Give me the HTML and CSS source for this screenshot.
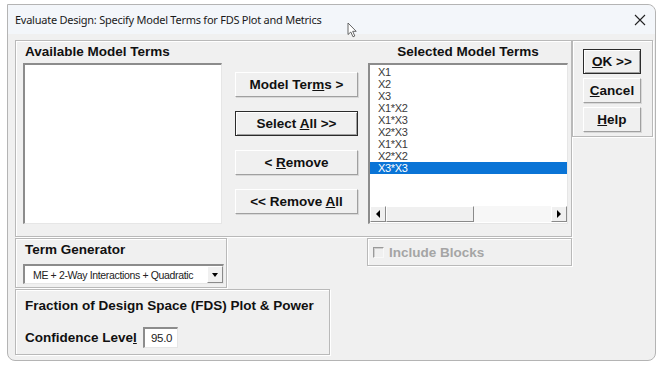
FILE: index.html
```html
<!DOCTYPE html>
<html lang="en">
<head>
    <meta charset="UTF-8">
    <title>Evaluate Design: Specify Model Terms for FDS Plot and Metrics</title>
    <link rel="stylesheet" href="styles.css">
</head>
<body>
    <div class="window">
        <div class="titlebar">
            <span class="title">Evaluate Design: Specify Model Terms for FDS Plot and Metrics</span>
            <svg class="close" width="12" height="12" viewBox="0 0 12 12">
                <path d="M1 1 L11 11 M11 1 L1 11" stroke="#222" stroke-width="1.1" fill="none"/>
            </svg>
        </div>
        <svg class="cursor" width="11" height="16" viewBox="0 0 11 16">
            <path d="M1 1 L1 12.5 L3.8 10 L6 14.8 L7.8 14 L5.7 9.3 L9.2 9.3 Z" fill="#fff" stroke="#555" stroke-width="0.9"/>
        </svg>

        <div class="client">
            <div class="top-row">
                <div class="group main-group">
                    <div class="list-col">
                        <div class="group-label">Available Model Terms</div>
                        <div class="listbox"></div>
                    </div>
                    <div class="button-col">
                        <button class="btn wide">Model Ter<u>m</u>s &gt;</button>
                        <button class="btn wide default">Select <u>A</u>ll &gt;&gt;</button>
                        <button class="btn wide">&lt; <u>R</u>emove</button>
                        <button class="btn wide">&lt;&lt; Remove <u>A</u>ll</button>
                    </div>
                    <div class="list-col selected-col">
                        <div class="group-label centered">Selected Model Terms</div>
                        <div class="listbox terms">
                            <ul class="items">
                                <li>X1</li>
                                <li>X2</li>
                                <li>X3</li>
                                <li>X1*X2</li>
                                <li>X1*X3</li>
                                <li>X2*X3</li>
                                <li>X1*X1</li>
                                <li>X2*X2</li>
                                <li class="selected">X3*X3</li>
                            </ul>
                            <div class="hscroll">
                                <div class="arrow-btn"><span class="tri left"></span></div>
                                <div class="thumb"></div>
                                <div class="track"></div>
                                <div class="arrow-btn"><span class="tri right"></span></div>
                            </div>
                        </div>
                    </div>
                </div>
                <div class="group side-group">
                    <button class="btn small default"><u>O</u>K &gt;&gt;</button>
                    <button class="btn small"><u>C</u>ancel</button>
                    <button class="btn small"><u>H</u>elp</button>
                </div>
            </div>

            <div class="bottom-row">
                <div class="left-stack">
                    <div class="group term-group">
                        <div class="group-label">Term Generator</div>
                        <div class="combo">
                            <span class="combo-text">ME + 2-Way Interactions + Quadratic</span>
                            <div class="combo-btn"><span class="tri down"></span></div>
                        </div>
                    </div>
                    <div class="group fds-group">
                        <div class="group-label">Fraction of Design Space (FDS) Plot &amp; Power</div>
                        <div class="field-row">
                            <span class="field-label">Confidence Leve<u>l</u></span>
                            <div class="textbox">95.0</div>
                        </div>
                    </div>
                </div>
                <div class="group blocks-group">
                    <span class="checkbox"></span>
                    <span class="disabled-label">Include Blocks</span>
                </div>
            </div>
        </div>
    </div>
</body>
</html>
```

FILE: styles.css
```css
body {
    margin: 0;
    background: #ffffff;
    font-family: "Liberation Sans", Arial, sans-serif;
}

.window {
    position: relative;
    margin: 4px 0 0 7px;
    width: 647px;
    height: 355px;
    border: 1px solid #b4b4b4;
    border-radius: 0 8px 8px 8px;
    background: #f0f0f0;
}
.window:after {
    content: '';
    position: absolute;
    left: 78px;
    right: -2px;
    bottom: -3px;
    height: 2px;
    background: #9c9c24;
}

.titlebar {
    height: 29px;
    display: flex;
    align-items: center;
    justify-content: space-between;
    padding: 0 9px 0 7px;
    background: #f3f6fa;
    border-radius: 0 8px 0 0;
}
.title {
    font-family: "Noto Sans", sans-serif;
    font-size: 11px;
    color: #1a1a1a;
    letter-spacing: -0.25px;
}
.close {
    margin-top: 1px;
}
.cursor {
    position: absolute;
    left: 339px;
    top: 17px;
}

.client {
    padding: 6px 0 0 7px;
}

.group {
    box-sizing: border-box;
    border: 1px solid #b9b9b9;
    box-shadow: inset 1px 1px 0 #ffffff, 1px 1px 0 #ffffff;
}
.group-label {
    font-weight: bold;
    font-size: 13.5px;
    color: #111;
    height: 21px;
    line-height: 20px;
    padding-left: 2px;
}
.group-label.centered {
    text-align: center;
    padding-left: 0;
}

.top-row {
    display: flex;
}
.main-group {
    width: 557px;
    height: 197px;
    display: flex;
    padding: 1px 0 0 7px;
}
.list-col {
    width: 199px;
}
.selected-col {
    width: 200px;
}

.listbox {
    box-sizing: border-box;
    height: 161px;
    background: #ffffff;
    border-style: solid;
    border-width: 2px 1px 1px 2px;
    border-color: #8c8c8c #e6e6e6 #e6e6e6 #8c8c8c;
}
.terms {
    display: flex;
    flex-direction: column;
}
.items {
    list-style: none;
    margin: 0;
    padding: 1px 0 0 0;
    flex: 1;
}
.items li {
    font-size: 11px;
    line-height: 12px;
    height: 12px;
    color: #3a3a3a;
    padding-left: 8px;
    letter-spacing: -0.3px;
}
.items li.selected {
    background: #0a74d6;
    color: #ffffff;
}

.hscroll {
    display: flex;
    height: 16px;
    margin-bottom: 1px;
}
.arrow-btn {
    width: 16px;
    height: 16px;
    box-sizing: border-box;
    background: #f0f0f0;
    border-style: solid;
    border-width: 1px;
    border-color: #ffffff #8a8a8a #8a8a8a #ffffff;
    display: flex;
    align-items: center;
    justify-content: center;
}
.thumb {
    width: 88px;
    box-sizing: border-box;
    background: #f0f0f0;
    border-style: solid;
    border-width: 1px;
    border-color: #ffffff #8a8a8a #8a8a8a #ffffff;
}
.track {
    flex: 1;
    background: #f7f7f7;
}
.tri {
    width: 0;
    height: 0;
    border: 4px solid transparent;
}
.tri.left {
    border-right-color: #000;
    border-left-width: 0;
}
.tri.right {
    border-left-color: #000;
    border-right-width: 0;
}
.tri.down {
    border-top-color: #000;
    border-bottom-width: 0;
    border-width: 4px 3px 0 3px;
}

.button-col {
    display: flex;
    flex-direction: column;
    gap: 14px;
    padding: 30px 10px 0 13px;
}

.btn {
    font-family: "Liberation Sans", Arial, sans-serif;
    font-weight: bold;
    font-size: 13.5px;
    color: #111;
    background: #f0f0f0;
    box-sizing: border-box;
    height: 25px;
    padding: 0;
    border-style: solid;
    border-width: 1px;
    border-color: #ffffff #a0a0a0 #a0a0a0 #ffffff;
    box-shadow: 1px 1px 0 #d8d8d8;
}
.btn.default {
    border: 1px solid #2b2b2b;
    box-shadow: inset 1px 1px 0 #ffffff, inset -1px -1px 0 #a0a0a0;
}
.btn.wide {
    width: 123px;
}
.btn.small {
    width: 58px;
}

.side-group {
    width: 81px;
    height: 97px;
    display: flex;
    flex-direction: column;
    gap: 4px;
    padding: 8px 0 0 10px;
}

.bottom-row {
    display: flex;
    margin-top: 1px;
}
.left-stack {
    display: flex;
    flex-direction: column;
    gap: 1px;
}
.term-group {
    width: 212px;
    height: 50px;
    padding: 1px 0 0 7px;
}
.combo {
    box-sizing: border-box;
    width: 201px;
    height: 20px;
    background: #ffffff;
    border-style: solid;
    border-width: 2px 1px 1px 2px;
    border-color: #8c8c8c #e6e6e6 #e6e6e6 #8c8c8c;
    display: flex;
    align-items: center;
    justify-content: space-between;
    margin-top: 3px;
}
.combo-text {
    font-size: 10.5px;
    color: #222;
    padding-left: 8px;
    letter-spacing: -0.35px;
}
.combo-btn {
    width: 16px;
    height: 17px;
    box-sizing: border-box;
    background: #f0f0f0;
    border-style: solid;
    border-width: 1px;
    border-color: #ffffff #8a8a8a #8a8a8a #ffffff;
    display: flex;
    align-items: center;
    justify-content: center;
}

.fds-group {
    width: 315px;
    height: 66px;
    padding: 6px 0 0 7px;
}
.field-row {
    display: flex;
    align-items: center;
    margin-top: 10px;
}
.field-label {
    font-weight: bold;
    font-size: 13.5px;
    color: #111;
    padding-left: 2px;
    width: 118px;
}
.textbox {
    box-sizing: border-box;
    width: 35px;
    height: 21px;
    background: #ffffff;
    border-style: solid;
    border-width: 2px 1px 1px 2px;
    border-color: #8c8c8c #e6e6e6 #e6e6e6 #8c8c8c;
    font-size: 11.5px;
    line-height: 18px;
    padding-left: 6px;
    color: #222;
    letter-spacing: -0.3px;
}

.blocks-group {
    width: 205px;
    height: 28px;
    margin-left: 37px;
    display: flex;
    align-items: center;
    padding-left: 5px;
    gap: 5px;
}
.checkbox {
    width: 11px;
    height: 11px;
    box-sizing: border-box;
    border-style: solid;
    border-width: 1px;
    border-color: #9a9a9a #f8f8f8 #f8f8f8 #9a9a9a;
    box-shadow: inset 1px 1px 0 #cfcfcf;
}
.disabled-label {
    font-weight: bold;
    font-size: 13.5px;
    color: #a5a5a5;
}
```
